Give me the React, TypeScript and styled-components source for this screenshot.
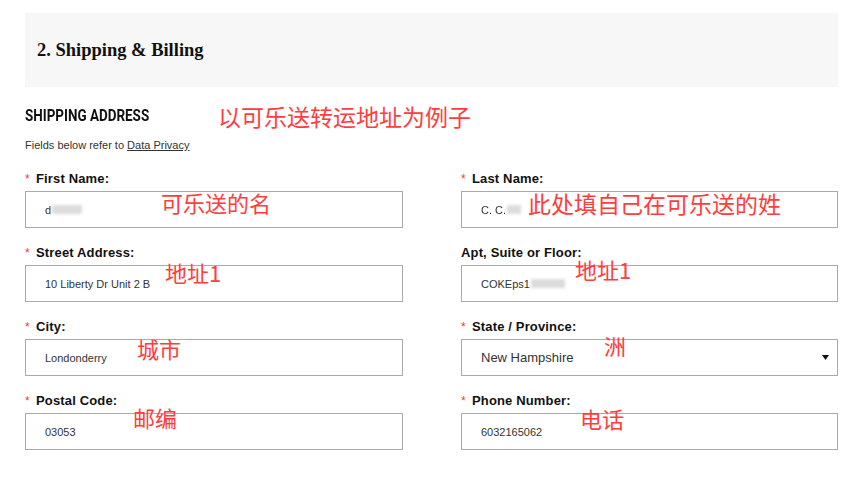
import React from "react";
import styled, { createGlobalStyle } from "styled-components";

const Global = createGlobalStyle`
  html, body { margin: 0; padding: 0; background: #ffffff; }
  body { font-family: "Liberation Sans", Arial, sans-serif; color: #222; }
`;

const Page = styled.div`
  width: 860px;
  height: 490px;
  box-sizing: border-box;
  padding: 13px 22px 0 25px;
  overflow: hidden;
`;

const StepHeader = styled.div`
  height: 74px;
  background: #f7f7f7;
  display: flex;
  align-items: center;
  padding-left: 12px;
`;

const StepTitle = styled.h2`
  margin: 0;
  font-family: "Liberation Serif", "Times New Roman", serif;
  font-weight: bold;
  font-size: 18.5px;
  color: #111;
`;

const TitleRow = styled.div`
  margin-top: 16px;
  display: grid;
  grid-template-columns: 193px auto;
  align-items: center;
  height: 26px;
`;

const SectionTitle = styled.h3`
  margin: 0;
  line-height: 20px;
  font-family: Roboto, "Liberation Sans", sans-serif;
  font-weight: 700;
  font-size: 16px;
  color: #111;
  white-space: nowrap;
  transform: scaleX(0.84);
  transform-origin: left center;
`;

const Annotation = styled.span<{ $s?: number }>`
  font-family: "Noto Sans CJK SC", "Noto Sans", sans-serif;
  font-size: ${(p) => p.$s ?? 22}px;
  line-height: 1;
  color: #ff3d3d;
  white-space: nowrap;
`;

const FloatNote = styled(Annotation)<{ $x: number; $y: number }>`
  position: absolute;
  left: ${(p) => p.$x}px;
  top: ${(p) => p.$y}px;
  pointer-events: none;
`;

const Note = styled.p`
  margin: 10px 0 0;
  font-size: 11px;
  line-height: 13px;
  color: #333;
  a {
    color: #333;
    text-decoration: underline;
  }
`;

const Grid = styled.div`
  margin-top: 19px;
  display: grid;
  grid-template-columns: 378px 377px;
  column-gap: 58px;
  row-gap: 17px;
`;

const Field = styled.div`
  position: relative;
  display: flex;
  flex-direction: column;
`;

const Label = styled.label`
  display: flex;
  align-items: flex-start;
  height: 16px;
  line-height: 16px;
  margin-bottom: 4px;
  font-size: 13px;
  font-weight: bold;
  letter-spacing: 0.15px;
  color: #111;
`;

const Star = styled.span`
  color: #e8413a;
  font-size: 12px;
  font-weight: normal;
  line-height: 12px;
  margin-top: 2px;
  width: 11px;
  flex: none;
`;

const Box = styled.div<{ $select?: boolean }>`
  height: 37px;
  box-sizing: border-box;
  border: 1px solid #aaaaaa;
  display: flex;
  align-items: center;
  justify-content: space-between;
  padding: 0 8px 0 19px;
  font-size: ${(p) => (p.$select ? "13px" : "11px")};
  color: ${(p) => (p.$select ? "#333" : "#333")};
  background: #fff;
`;

const Value = styled.span`
  display: flex;
  align-items: center;
  white-space: nowrap;
`;

const Blur = styled.span<{ $w: number }>`
  display: inline-block;
  width: ${(p) => p.$w}px;
  height: 9px;
  margin-left: 1px;
  background: #dcdcdc;
  filter: blur(1.5px);
`;

const Soft = styled.span`
  filter: blur(0.6px);
`;

const Arrow = () => (
  <svg width="7" height="5" viewBox="0 0 7 5" aria-hidden>
    <polygon points="0,0 7,0 3.5,5" fill="#111" />
  </svg>
);

type F = {
  label: string;
  req: boolean;
  value: React.ReactNode;
  select?: boolean;
  note: string;
  nx: number;
  ny: number;
  ns?: number;
};

const fields: F[] = [
  { label: "First Name:", req: true, value: <>d<Blur $w={30} /></>, note: "可乐送的名", nx: 136, ny: 20 },
  { label: "Last Name:", req: true, value: <><Soft>C. C.</Soft><Blur $w={14} /></>, note: "此处填自己在可乐送的姓", nx: 67, ny: 21, ns: 23 },
  { label: "Street Address:", req: true, value: "10 Liberty Dr Unit 2 B", note: "地址1", nx: 140, ny: 16 },
  { label: "Apt, Suite or Floor:", req: false, value: <>COKEps1<Blur $w={34} /></>, note: "地址1", nx: 114, ny: 13 },
  { label: "City:", req: true, value: "Londonderry", note: "城市", nx: 112, ny: 18 },
  { label: "State / Province:", req: true, value: "New Hampshire", select: true, note: "洲", nx: 143, ny: 15 },
  { label: "Postal Code:", req: true, value: "03053", note: "邮编", nx: 108, ny: 13 },
  { label: "Phone Number:", req: true, value: "6032165062", note: "电话", nx: 119, ny: 14 },
];

export default function App() {
  return (
    <>
      <Global />
      <Page>
        <StepHeader>
          <StepTitle>2. Shipping &amp; Billing</StepTitle>
        </StepHeader>
        <TitleRow>
          <SectionTitle>SHIPPING ADDRESS</SectionTitle>
          <Annotation $s={23}>以可乐送转运地址为例子</Annotation>
        </TitleRow>
        <Note>
          Fields below refer to <a href="#">Data Privacy</a>
        </Note>
        <Grid>
          {fields.map((f) => (
            <Field key={f.label}>
              <Label>
                {f.req && <Star>*</Star>}
                {f.label}
              </Label>
              <Box $select={f.select}>
                <Value>{f.value}</Value>
                {f.select && <Arrow />}
              </Box>
              <FloatNote $x={f.nx} $y={f.ny} $s={f.ns}>
                {f.note}
              </FloatNote>
            </Field>
          ))}
        </Grid>
      </Page>
    </>
  );
}
